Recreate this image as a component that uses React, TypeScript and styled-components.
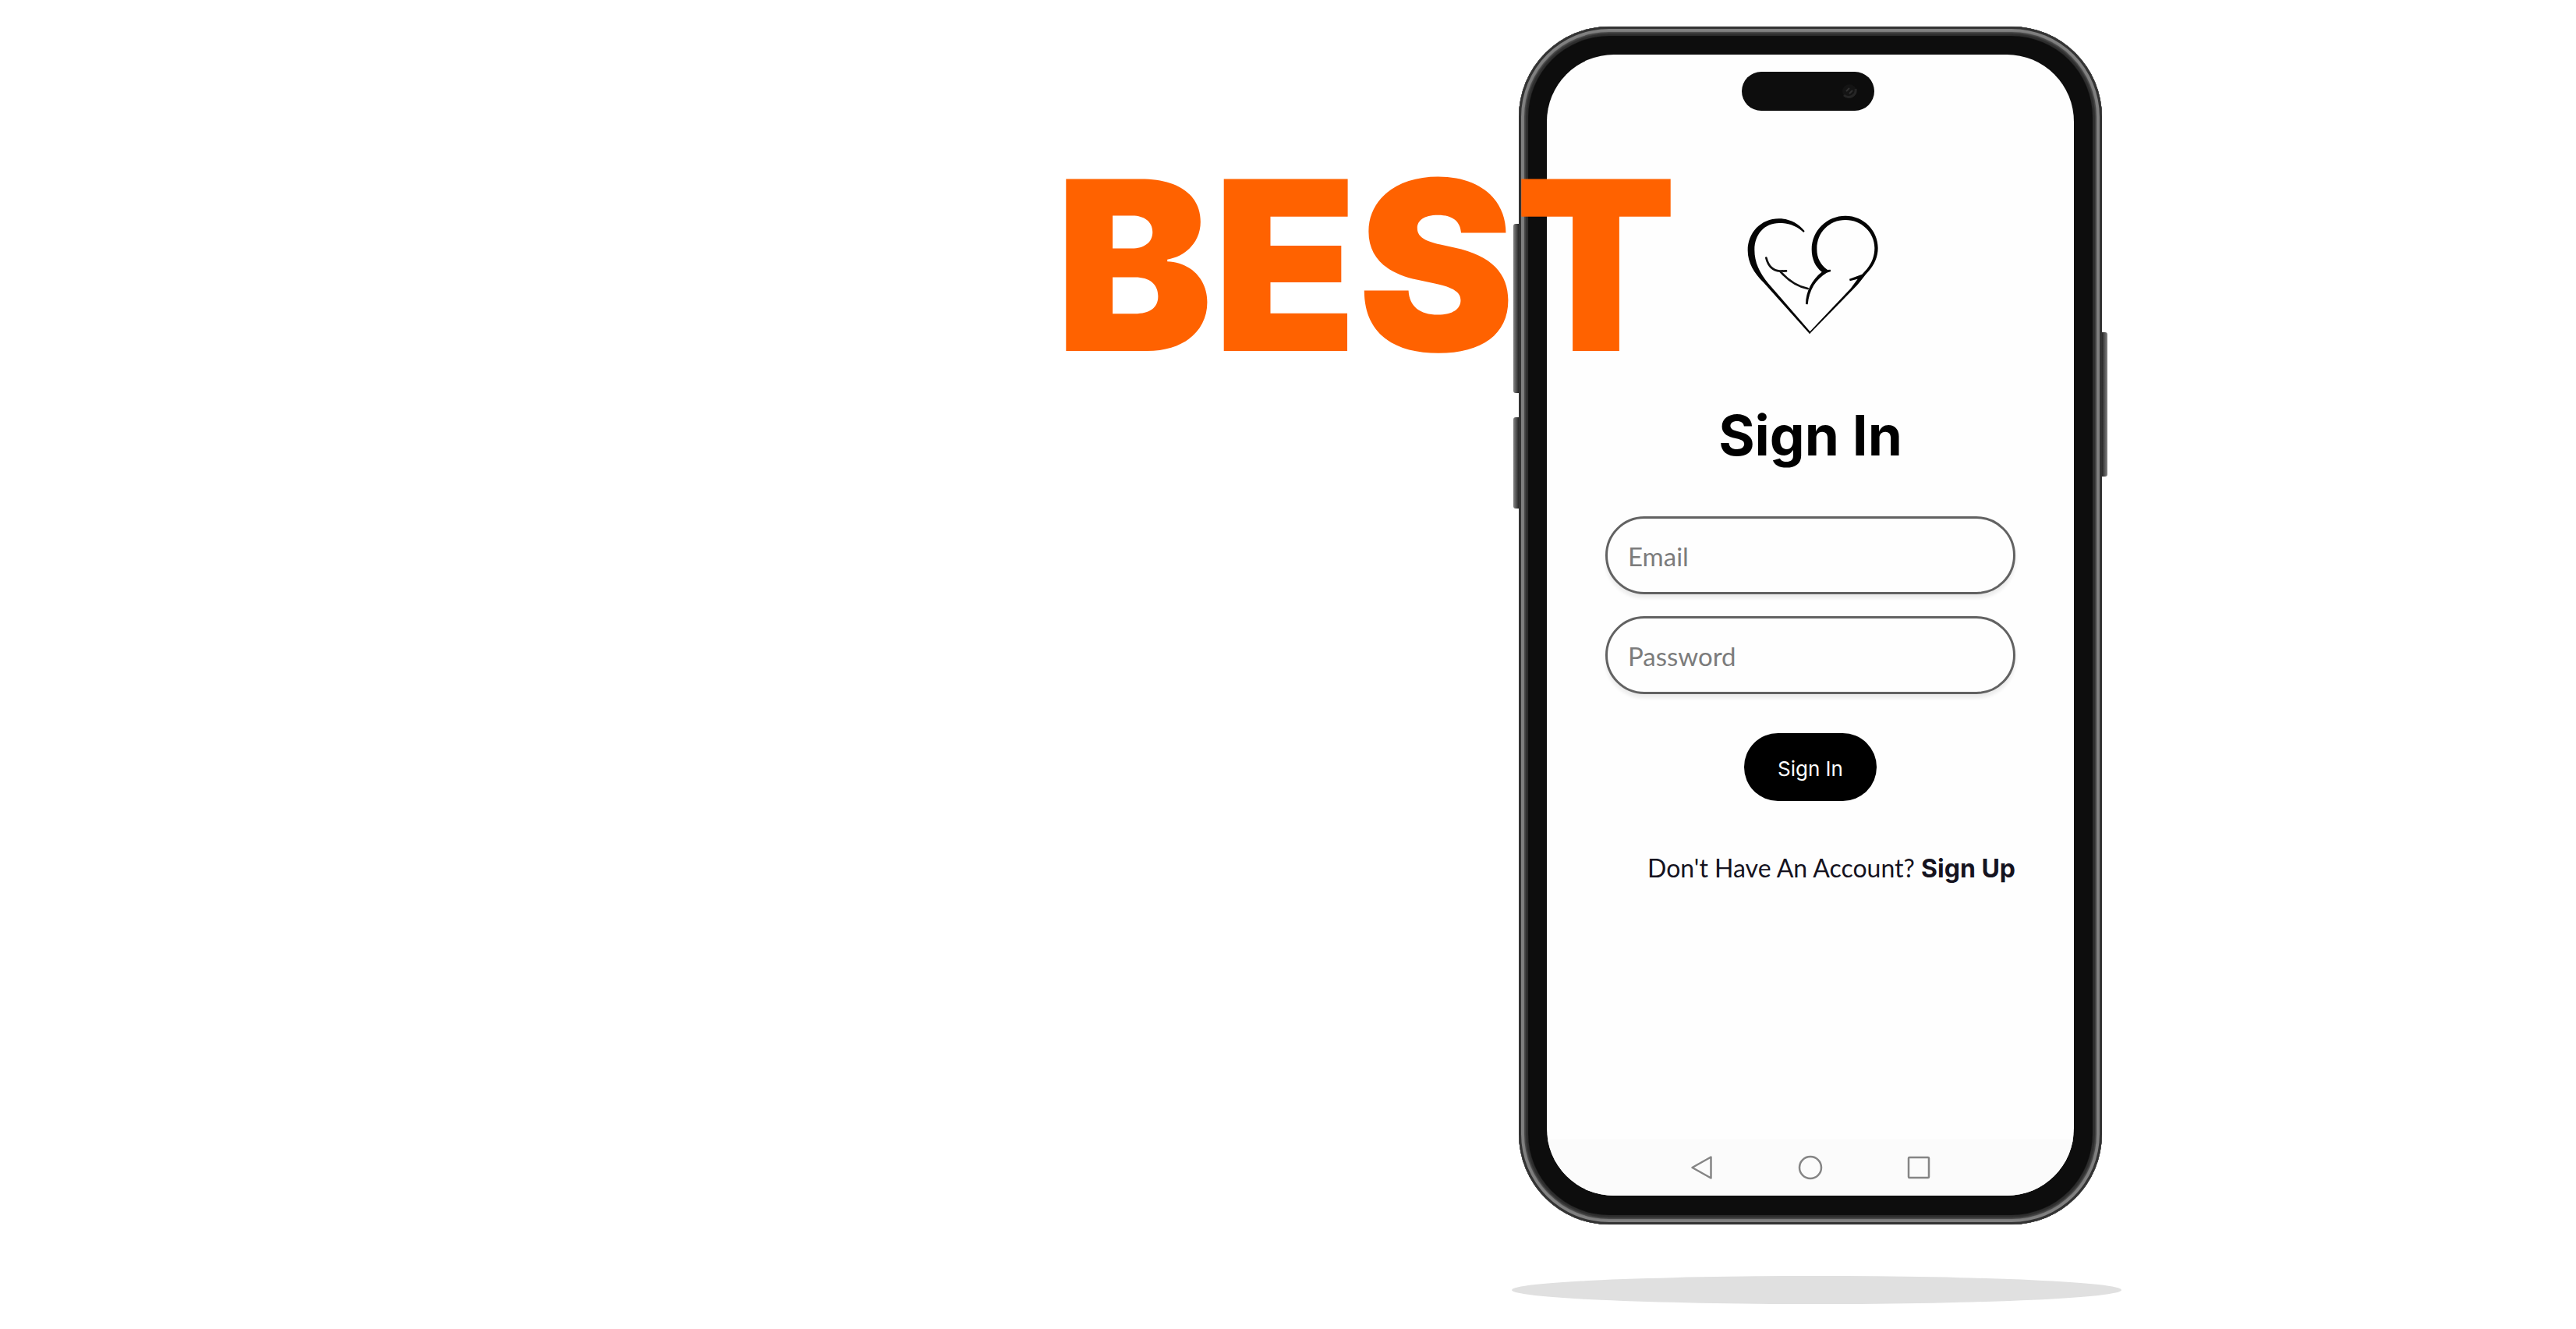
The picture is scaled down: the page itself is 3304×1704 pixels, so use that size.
import React from 'react';
import styled, { createGlobalStyle } from 'styled-components';

const GlobalStyle = createGlobalStyle`
  *, *::before, *::after { box-sizing: border-box; }
  body {
    margin: 0;
    background: #fff;
    color: #15131f;
    font-family: Lato, "Liberation Sans", sans-serif;
  }
`;

const Page = styled.main`
  display: grid;
  grid-template-columns: minmax(0, 1948fr) 748px minmax(0, 608fr);
  align-items: start;
  min-height: 100vh;
  padding-top: 34px;
`;

const Headline = styled.h1`
  grid-area: 1 / 1;
  z-index: 1;
  justify-self: end;
  margin: 156px -203px 0 0;
  color: #ff6200;
  font: 900 303px/300px Inter, "Liberation Sans", sans-serif;
  white-space: nowrap;
`;

const Device = styled.section`
  grid-area: 1 / 2;
  display: flex;
  flex-direction: column;
  align-items: center;
`;

const Body = styled.div`
  position: relative;
  width: 100%;
  height: 1536px;
  padding: 36px 36px 37px;
  border-radius: 116px;
  background: #0d0d0d;
  box-shadow:
    inset 0 0 0 3px #333,
    inset 0 0 1px 7px #808080,
    inset 0 0 1px 9px #444,
    inset 0 0 1px 12px #2f2f2f;
`;

const SideKey = styled.span<{ $side: 'left' | 'right'; $top: number; $length: number }>`
  position: absolute;
  top: ${(p) => p.$top}px;
  ${(p) => p.$side}: -7px;
  width: 7px;
  height: ${(p) => p.$length}px;
  border-radius: ${(p) => (p.$side === 'left' ? '3px 0 0 3px' : '0 3px 3px 0')};
  background: linear-gradient(to ${(p) => p.$side}, #262626, #555 50%, #858585);
`;

const Screen = styled.div`
  display: flex;
  flex-direction: column;
  align-items: center;
  height: 100%;
  overflow: hidden;
  border-radius: 86px;
  background: #fefefe;
  padding-top: 22px;
`;

const Island = styled.div`
  display: flex;
  align-items: center;
  justify-content: flex-end;
  width: 170px;
  height: 50px;
  margin-right: 6px;
  padding-right: 21px;
  border-radius: 25px;
  background: #0d0d0d;
`;

const Logo = styled.svg`
  display: block;
  width: 250px;
  height: 200px;
  margin: 108px 0 0 6px;
`;

const Title = styled.h2`
  margin: 64px 0 60px;
  color: #000;
  font: 700 71px/88px Inter, "Liberation Sans", sans-serif;
`;

const Form = styled.form`
  display: flex;
  flex-direction: column;
  align-items: center;
  gap: 28px;
  width: 526px;
`;

const Input = styled.input`
  display: block;
  width: 100%;
  height: 100px;
  padding: 2px 26px 0;
  border: 3px solid #626262;
  border-radius: 50px;
  outline: 0;
  background: #fefefe;
  box-shadow: 0 5px 4px #ececec;
  color: #15131f;
  font: 400 33px/40px Lato, "Liberation Sans", sans-serif;

  &::placeholder {
    color: #7c7c7c;
    opacity: 1;
  }
`;

const Submit = styled.button`
  width: 170px;
  height: 87px;
  margin-top: 22px;
  padding: 4px 0 0;
  border: 0;
  border-radius: 44px;
  background: #000;
  color: #fff;
  font: 400 26px/32px Inter, "Liberation Sans", sans-serif;
`;

const Prompt = styled.p`
  align-self: flex-end;
  margin: 38px 0 0;
  font-size: 32px;
  line-height: 40px;
  white-space: nowrap;
`;

const SignUp = styled.a`
  color: inherit;
  font-family: Inter, "Liberation Sans", sans-serif;
  font-weight: 700;
  text-decoration: none;
`;

const NavBar = styled.nav`
  display: flex;
  align-items: center;
  justify-content: center;
  gap: 107px;
  width: 100%;
  height: 72px;
  margin-top: auto;
  background: #fbfbfb;
`;

const NavButton = styled.button`
  display: flex;
  padding: 0;
  border: 0;
  background: none;
`;

const Shadow = styled.div`
  width: 782px;
  height: 36px;
  margin: 66px -25px 0 -9px;
  border-radius: 50%;
  background: #e0e0e0;
`;

const navIcons = [
  { label: 'Back', shape: <path d="M27.5 2.5v27L3.5 16z" /> },
  { label: 'Home', shape: <circle cx="16" cy="16" r="14" /> },
  { label: 'Recent apps', shape: <rect x="3" y="3" width="26" height="26" rx="1" /> },
];

function HeartLogo() {
  return (
    <Logo viewBox="0 0 750 600" role="img" aria-label="Mother and child heart">
      <path
        d="M344 139C318 108 285 91 245 91C176 91 125 145 125 213C125 262 150 300 186 337L363 534L367 528L205 341C170 300 151 259 151 211C151 151 190 108 246 108C284 107 315 121 340 144Z"
        fill="#050505"
      />
      <path
        d="M363 534L545 348C560 330 575 309 590 293C613 268 626 236 626 204C626 137 571 80 501 80C430 80 371 136 371 209C371 247 386 277 410 296C373 325 348 370 348 420L356 421C361 365 386 325 429 299L445 294L443 287L432 288C405 268 391 244 391 207C391 144 439 96 501 96C562 96 613 144 613 204C613 235 602 262 584 284L565 305L516 323L518 331L548 323L520 361L361 529Z"
        fill="#050505"
      />
      <path
        d="M196 242C203 270 220 291 249 293L273 292M251 295C283 331 315 352 356 360"
        fill="none"
        stroke="#111"
        strokeWidth="8"
        strokeLinecap="round"
      />
    </Logo>
  );
}

export default function App() {
  return (
    <>
      <GlobalStyle />
      <Page>
        <Headline>BEST</Headline>
        <Device>
          <Body>
            <SideKey $side="left" $top={253} $length={217} />
            <SideKey $side="left" $top={501} $length={117} />
            <SideKey $side="right" $top={392} $length={185} />
            <Screen>
              <Island>
                <svg width="21" height="21" viewBox="0 0 21 21" aria-hidden="true">
                  <circle cx="10" cy="10" r="9" fill="#141414" />
                  <path d="M3 15a9 9 0 0 0 15-8" fill="none" stroke="#252525" strokeWidth="3" />
                  <path d="M6 10l4-4M10 13l4-4" stroke="#303030" strokeWidth="2" />
                </svg>
              </Island>
              <HeartLogo />
              <Title>Sign In</Title>
              <Form onSubmit={(e) => e.preventDefault()}>
                <Input type="email" placeholder="Email" aria-label="Email" />
                <Input type="password" placeholder="Password" aria-label="Password" />
                <Submit type="submit">Sign In</Submit>
                <Prompt>
                  Don't Have An Account? <SignUp href="#signup">Sign Up</SignUp>
                </Prompt>
              </Form>
              <NavBar aria-label="System">
                {navIcons.map(({ label, shape }) => (
                  <NavButton key={label} type="button" aria-label={label}>
                    <svg width="32" height="32" viewBox="0 0 32 32" fill="none" stroke="#858585" strokeWidth="2.5" strokeLinejoin="round">
                      {shape}
                    </svg>
                  </NavButton>
                ))}
              </NavBar>
            </Screen>
          </Body>
          <Shadow />
        </Device>
      </Page>
    </>
  );
}
